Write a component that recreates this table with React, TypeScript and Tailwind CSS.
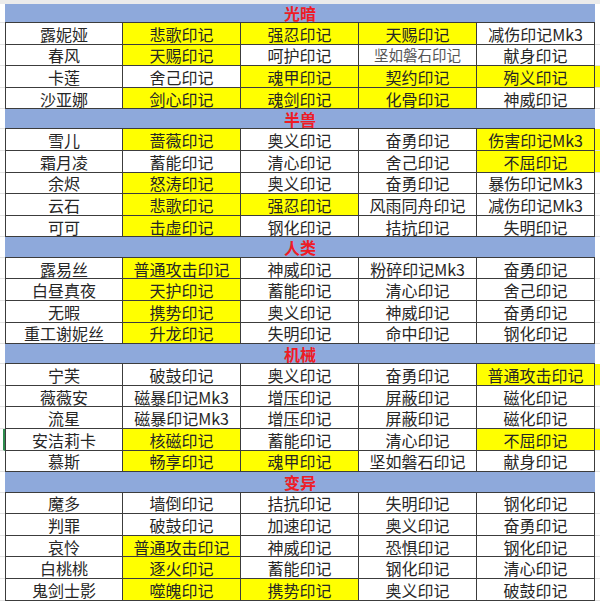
import React from 'react';

type Cell = { t: string; y?: boolean; small?: boolean };
type Row = { name: string; cells: Cell[]; mark?: boolean };
type Section = { title: string; band: string; rows: Row[] };

const Y = (t: string): Cell => ({ t, y: true });
const N = (t: string): Cell => ({ t });

const sections: Section[] = [
  {
    title: '光暗',
    band: 'h-[19px]',
    rows: [
      { name: '露妮娅', cells: [Y('悲歌印记'), Y('强忍印记'), Y('天赐印记'), N('减伤印记Mk3')] },
      { name: '春风', cells: [Y('天赐印记'), N('呵护印记'), { t: '坚如磐石印记', small: true }, N('献身印记')] },
      { name: '卡莲', cells: [N('舍己印记'), Y('魂甲印记'), Y('契约印记'), Y('殉义印记')] },
      { name: '沙亚娜', cells: [Y('剑心印记'), Y('魂剑印记'), Y('化骨印记'), N('神威印记')] },
    ],
  },
  {
    title: '半兽',
    band: 'h-[20px]',
    rows: [
      { name: '雪儿', cells: [Y('蔷薇印记'), N('奥义印记'), N('奋勇印记'), Y('伤害印记Mk3')] },
      { name: '霜月凌', cells: [N('蓄能印记'), N('清心印记'), N('舍己印记'), Y('不屈印记')] },
      { name: '余烬', cells: [Y('怒涛印记'), N('奥义印记'), N('奋勇印记'), N('暴伤印记Mk3')] },
      { name: '云石', cells: [Y('悲歌印记'), Y('强忍印记'), N('风雨同舟印记'), N('减伤印记Mk3')] },
      { name: '可可', cells: [Y('击虚印记'), N('钢化印记'), N('拮抗印记'), N('失明印记')] },
    ],
  },
  {
    title: '人类',
    band: 'h-[20.5px]',
    rows: [
      { name: '露易丝', cells: [Y('普通攻击印记'), N('神威印记'), N('粉碎印记Mk3'), N('奋勇印记')] },
      { name: '白昼真夜', cells: [Y('天护印记'), N('蓄能印记'), N('清心印记'), N('舍己印记')] },
      { name: '无暇', cells: [Y('携势印记'), N('奥义印记'), N('神威印记'), N('奋勇印记')] },
      { name: '重工谢妮丝', cells: [Y('升龙印记'), N('失明印记'), N('命中印记'), N('钢化印记')] },
    ],
  },
  {
    title: '机械',
    band: 'h-[20px]',
    rows: [
      { name: '宁芙', cells: [N('破鼓印记'), N('奥义印记'), N('奋勇印记'), Y('普通攻击印记')] },
      { name: '薇薇安', cells: [N('磁暴印记Mk3'), N('增压印记'), N('屏蔽印记'), N('磁化印记')] },
      { name: '流星', cells: [N('磁暴印记Mk3'), N('增压印记'), N('屏蔽印记'), N('磁化印记')] },
      { name: '安洁莉卡', mark: true, cells: [Y('核磁印记'), N('蓄能印记'), N('清心印记'), Y('不屈印记')] },
      { name: '慕斯', cells: [Y('畅享印记'), Y('魂甲印记'), N('坚如磐石印记'), N('献身印记')] },
    ],
  },
  {
    title: '变异',
    band: 'h-[20.5px]',
    rows: [
      { name: '魔多', cells: [N('墙倒印记'), N('拮抗印记'), N('失明印记'), N('钢化印记')] },
      { name: '判罪', cells: [N('破鼓印记'), N('加速印记'), N('奥义印记'), N('奋勇印记')] },
      { name: '哀怜', cells: [Y('普通攻击印记'), N('神威印记'), N('恐惧印记'), N('钢化印记')] },
      { name: '白桃桃', cells: [Y('逐火印记'), N('蓄能印记'), N('钢化印记'), N('清心印记')] },
      { name: '鬼剑士影', cells: [Y('噬魄印记'), Y('携势印记'), N('奥义印记'), N('破鼓印记')] },
    ],
  },
];

function DataRow({ row }: { row: Row }) {
  const lastYellow = row.cells[row.cells.length - 1].y;

  return (
    <div className="flex h-[21.6px]">
      <div
        className={`w-[5px] shrink-0 border-b border-[#e2e2e2] ${
          row.mark ? 'border-r-2 border-r-[#2e8b4e]' : ''
        }`}
      />
      <div className="flex w-[118px] shrink-0 items-center justify-center border-r border-b border-l border-[#3c3c3c] pt-px">
        {row.name}
      </div>
      {row.cells.map((cell, i) => (
        <div
          key={i}
          className={`flex w-[118px] shrink-0 items-center justify-center border-r border-b border-[#3c3c3c] pt-px ${
            cell.y ? 'bg-[#ffff00]' : 'bg-white'
          } ${cell.small ? 'text-[14.5px] text-[#555555]' : ''}`}
        >
          {cell.t}
        </div>
      ))}
      <div
        className={`w-[5px] shrink-0 border-b border-[#e2e2e2] ${
          lastYellow ? 'bg-[#ffff00]' : 'bg-white'
        }`}
      />
    </div>
  );
}

export default function App() {
  return (
    <div className="h-[606px] w-[600px] overflow-hidden bg-white font-['Noto_Sans_CJK_SC','Noto_Sans',sans-serif] text-[16px] leading-none text-[#262626]">
      <div className="h-[4px] bg-[#ebebeb]" />

      {sections.map((section) => (
        <div key={section.title}>
          <div className={`flex ${section.band}`}>
            <div className="w-[5px] shrink-0 border-b border-[#e2e2e2]" />
            <div className="flex w-[590px] shrink-0 items-center justify-center border-b border-[#3c3c3c] bg-[#8ea9db] font-bold text-[#ee1c25]">
              {section.title}
            </div>
            <div className="w-[5px] shrink-0" />
          </div>

          {section.rows.map((row) => (
            <DataRow key={row.name} row={row} />
          ))}
        </div>
      ))}
    </div>
  );
}
